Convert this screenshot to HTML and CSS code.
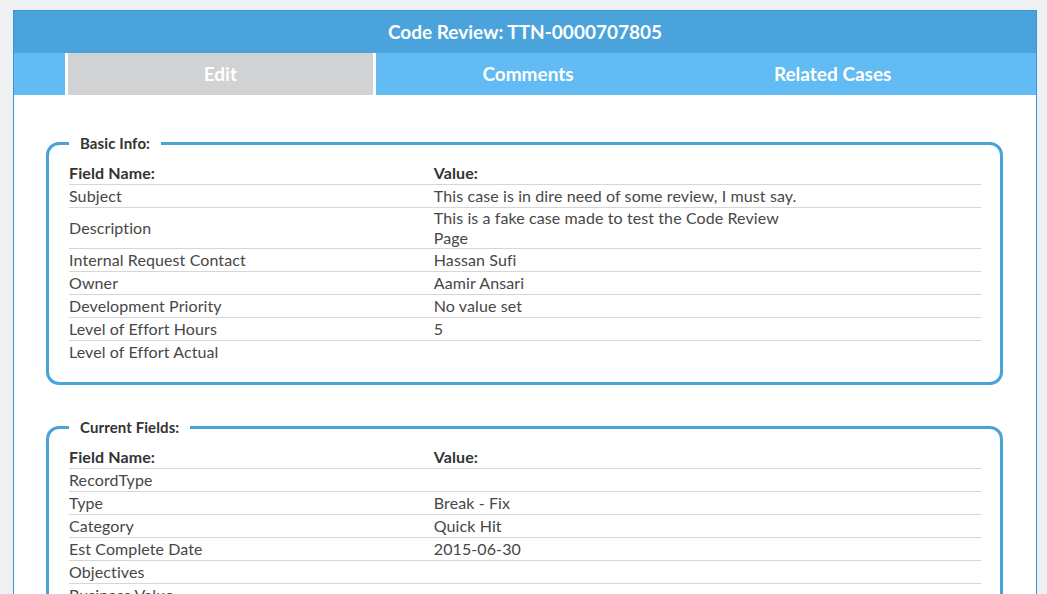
FILE: index.html
```html
<!DOCTYPE html>
<html lang="en">
<head>
<meta charset="utf-8">
<title>Code Review: TTN-0000707805</title>
<link rel="stylesheet" href="styles.css">
</head>
<body>
<div class="panel">
  <div class="panel-title">Code Review: TTN-0000707805</div>
  <nav class="tabs">
    <div class="tab tab-active">Edit</div>
    <div class="tab">Comments</div>
    <div class="tab">Related Cases</div>
  </nav>
  <div class="panel-body">
    <fieldset class="group">
      <legend class="group-legend">Basic Info:</legend>
      <table class="fields">
        <colgroup><col class="col-name"><col class="col-value"><col class="col-rest"></colgroup>
        <tr><th>Field Name:</th><th>Value:</th><th></th></tr>
        <tr><td>Subject</td><td>This case is in dire need of some review, I must say.</td><td></td></tr>
        <tr><td>Description</td><td>This is a fake case made to test the Code Review Page</td><td></td></tr>
        <tr><td>Internal Request Contact</td><td>Hassan Sufi</td><td></td></tr>
        <tr><td>Owner</td><td>Aamir Ansari</td><td></td></tr>
        <tr><td>Development Priority</td><td>No value set</td><td></td></tr>
        <tr><td>Level of Effort Hours</td><td>5</td><td></td></tr>
        <tr><td>Level of Effort Actual</td><td></td><td></td></tr>
      </table>
    </fieldset>
    <fieldset class="group">
      <legend class="group-legend">Current Fields:</legend>
      <table class="fields">
        <colgroup><col class="col-name"><col class="col-value"><col class="col-rest"></colgroup>
        <tr><th>Field Name:</th><th>Value:</th><th></th></tr>
        <tr><td>RecordType</td><td></td><td></td></tr>
        <tr><td>Type</td><td>Break - Fix</td><td></td></tr>
        <tr><td>Category</td><td>Quick Hit</td><td></td></tr>
        <tr><td>Est Complete Date</td><td>2015-06-30</td><td></td></tr>
        <tr><td>Objectives</td><td></td><td></td></tr>
        <tr><td>Business Value</td><td></td><td></td></tr>
      </table>
    </fieldset>
  </div>
</div>
</body>
</html>
```
FILE: styles.css
```css
html, body {
  margin: 0;
  padding: 0;
  background: #eff0f2;
}
body {
  font-family: Lato, "Open Sans", Arial, sans-serif;
  color: #474747;
  padding: 10px 0 0 13px;
}
.panel {
  width: 1024px;
  box-sizing: border-box;
  border: 1px solid #3a94d6;
  border-bottom: none;
  background: #fff;
}
.panel-title {
  height: 42px;
  line-height: 42px;
  background: #4aa3db;
  color: #fff;
  text-align: center;
  font-size: 19px;
  font-weight: 700;
}
.tabs {
  display: flex;
  height: 42px;
  padding: 0 51px;
  background: #62bbf3;
}
.tab {
  flex: 1 1 0;
  box-sizing: border-box;
  line-height: 42px;
  text-align: center;
  color: #fff;
  font-size: 19px;
  font-weight: 700;
}
.tab-active {
  background: #d1d2d4;
  border-left: 3px solid #fff;
  border-right: 3px solid #fff;
}
.panel-body {
  padding: 39px 33px 0 32px;
}
.group {
  margin: 0 0 33px;
  padding: 10px 19px 19px 20px;
  border: 3px solid #4aa3d8;
  border-radius: 13px;
}
.group-legend {
  padding: 0 11px;
  font-size: 15px;
  line-height: 18px;
  font-weight: 700;
  letter-spacing: 0.1px;
  color: #333;
}
.fields {
  width: 100%;
  border-collapse: collapse;
  table-layout: fixed;
  font-size: 16px;
  letter-spacing: 0.1px;
  line-height: 20px;
}
.col-name { width: 40%; }
.col-value { width: 40%; }
.col-rest { width: 20%; }
.fields th,
.fields td {
  height: 22px;
  padding: 0;
  text-align: left;
  vertical-align: middle;
  border-bottom: 1px solid #d6d6d6;
}
.fields th {
  font-weight: 700;
  color: #333;
}
.fields tr:last-child td {
  border-bottom: none;
}
```
